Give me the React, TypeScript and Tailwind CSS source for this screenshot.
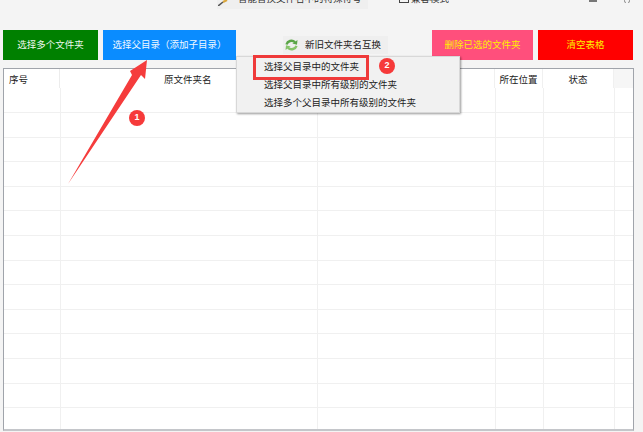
const font = "font-['Liberation_Sans','Noto_Sans_CJK_SC',sans-serif]";

const rows = Array.from({ length: 13 });

function Cols() {
  return (
    <>
      <div className="w-[57px] shrink-0 border-r border-[#f0f0f0]" />
      <div className="w-[257px] shrink-0 border-r border-[#f0f0f0]" />
      <div className="w-[178px] shrink-0 border-r border-[#f0f0f0]" />
      <div className="w-[48px] shrink-0 border-r border-[#f0f0f0]" />
      <div className="w-[71px] shrink-0 border-r border-[#f0f0f0]" />
      <div className="flex-1" />
    </>
  );
}

export default function App() {
  return (
    <div className={`relative h-[432px] w-[643px] overflow-hidden bg-[#f4f4f4] text-[9.5px] text-[#333] ${font}`}>
      <div className="flex h-[30px] items-start pl-[217px]">
        <div className="flex h-[9px] w-[151px] items-start overflow-hidden bg-[#efefef] pl-[1px]">
          <svg viewBox="0 0 10 6" className="h-[6px] w-[10px] shrink-0">
            <path d="M0 6 L5 2" stroke="#555" strokeWidth="1.6" fill="none" />
            <path d="M5 2 L9 0" stroke="#d9a53a" strokeWidth="2" fill="none" />
          </svg>
          <span className="-mt-[6px] ml-[10px] leading-[10px] whitespace-nowrap">智能替换文件名中的特殊符号</span>
        </div>
        <div className="ml-[31px] flex h-[9px] items-start gap-[2px] overflow-hidden">
          <span className="h-[3px] w-[10px] border-x border-b border-[#444]" />
          <span className="-mt-[6px] leading-[10px] whitespace-nowrap">兼容模式</span>
        </div>
        <span className="ml-[140px] h-[2px] w-[8px] bg-[#777]" />
        <svg viewBox="0 0 6 3" className="ml-[27px] h-[3px] w-[6px]">
          <path d="M0 0 L1.5 3 M6 0 L4.5 3" stroke="#666" strokeWidth="0.8" fill="none" />
        </svg>
      </div>

      <div className="flex h-[38px] items-start">
        <button className="ml-[3px] h-[30px] w-[95px] bg-[#008000] text-[#eef7ee]">选择多个文件夹</button>
        <button className="ml-[5px] h-[30px] w-[133px] bg-[#0a8cff] text-[#f0f8ff]">选择父目录（添加子目录）</button>
        <div className="ml-[47px] mt-[6px] flex h-[18px] w-[105px] items-center gap-[7px] bg-[#efefef] pl-[2px] text-[#222]">
          <svg viewBox="0 0 13 12" className="h-[12px] w-[13px] shrink-0">
            <path d="M1.5 5.5 C2.5 2 7 0.5 10 3.2" stroke="#5aa547" strokeWidth="2.4" fill="none" />
            <path d="M12.5 1 L12 5.8 L7.4 4.6 Z" fill="#5aa547" />
            <path d="M11.5 6.8 C10.5 10 6 11.5 3 8.8" stroke="#86c46a" strokeWidth="2.4" fill="none" />
            <path d="M0.5 11 L1 6.2 L5.6 7.4 Z" fill="#86c46a" />
          </svg>
          <span>新旧文件夹名互换</span>
        </div>
        <button className="ml-[44px] h-[30px] w-[101px] bg-[#ff4f7c] text-[#ffee00]">删除已选的文件夹</button>
        <button className="ml-[5px] h-[30px] w-[95px] bg-[#ff0000] text-[#ffee00]">清空表格</button>
      </div>

      <div className="ml-[3px] h-[363px] w-[631px] overflow-hidden border border-b-2 border-[#a0a4ab] border-b-[#c4c6ca] bg-white">
        <div className="flex h-[19px] items-start leading-[21px] text-[#222]">
          <div className="h-full w-[56px] shrink-0 border-r border-[#ececec] pl-[5px]">序号</div>
          <div className="h-full w-[258px] shrink-0 pl-[104px]">原文件夹名</div>
          <div className="h-full w-[177px] shrink-0 border-r border-[#f0f0f0]" />
          <div className="h-full w-[48px] shrink-0 border-r border-[#f0f0f0] text-center">所在位置</div>
          <div className="h-full w-[71px] shrink-0 border-r border-[#f0f0f0] text-center">状态</div>
          <div className="h-full flex-1 bg-[#f6f6f6]" />
        </div>
        <div className="flex h-[25px] border-b border-[#f0f0f0]">
          <Cols />
        </div>
        {rows.map((_, i) => (
          <div key={i} className="flex h-[24.6px] border-b border-[#f0f0f0]">
            <Cols />
          </div>
        ))}
        <div className="flex h-[24.6px]">
          <Cols />
        </div>
      </div>

      <div className="absolute left-[236px] top-[56px] flex h-[57px] w-[224px] flex-col gap-[3px] border border-[#d8d8d8] bg-[#f1f1f1] pl-[27px] pt-[2px] leading-[15px] text-[#222] shadow-[1px_1px_2px_rgba(0,0,0,0.4)]">
        <span>选择父目录中的文件夹</span>
        <span>选择父目录中所有级别的文件夹</span>
        <span>选择多个父目录中所有级别的文件夹</span>
      </div>
      <div className="absolute left-[253px] top-[55px] h-[25px] w-[116px] border-[3px] border-[#ef3a3a]" />

      <div className="absolute left-[129px] top-[110px] flex h-[16px] w-[16px] items-center justify-center rounded-full bg-[#f63a3a] text-[9px] font-bold text-white">1</div>
      <div className="absolute left-[379px] top-[58px] flex h-[16px] w-[16px] items-center justify-center rounded-full bg-[#f63a3a] text-[9px] font-bold text-white">2</div>

      <svg className="absolute left-[60px] top-[55px]" width="100" height="135" viewBox="60 55 100 135">
        <path d="M68 184 L132 75 L130 71 L147 60 L145 79 L141 75 Z" fill="#f53c3c" />
      </svg>
    </div>
  );
}
